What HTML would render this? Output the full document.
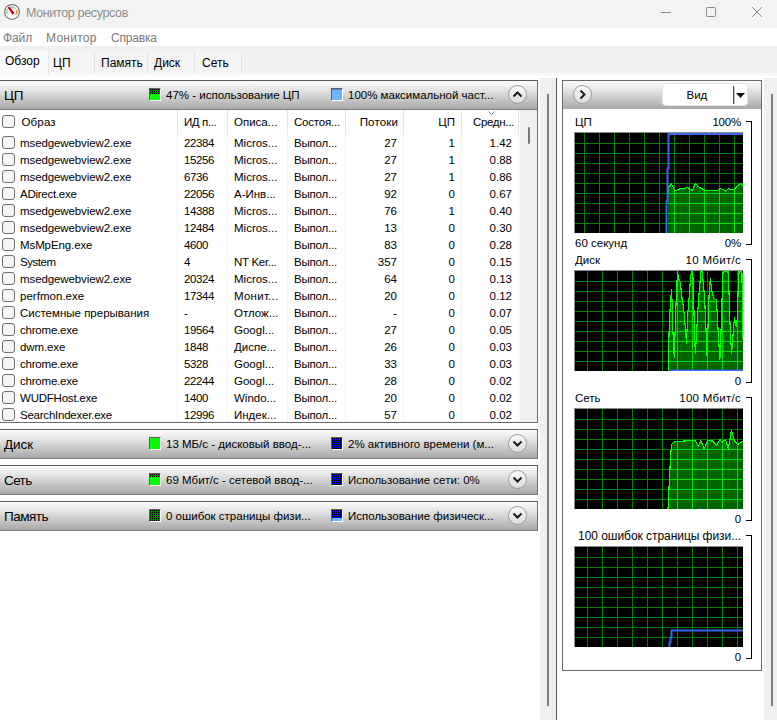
<!DOCTYPE html>
<html lang="ru"><head><meta charset="utf-8"><title>Монитор ресурсов</title>
<style>
*{margin:0;padding:0;box-sizing:border-box}
html,body{width:777px;height:720px;overflow:hidden;background:#fff}
body{position:relative;font-family:"Liberation Sans",sans-serif;font-size:11.5px;color:#000;line-height:1}
i{font-style:normal;display:block;position:absolute}
#titlebar{position:absolute;left:0;top:0;width:777px;height:28px;background:#f3f3f3}
#titlebar .ttl{position:absolute;left:26px;top:5px;font-size:12.5px;letter-spacing:-0.35px;color:#8b8b8b;white-space:nowrap;line-height:16px}
#menubar{position:absolute;left:0;top:28px;width:777px;height:18px;background:#fff}
#menubar span{position:absolute;top:3px;font-size:12px;color:#7a7a7a;white-space:nowrap;line-height:14px}
#tabs{position:absolute;left:0;top:46px;width:777px;height:31px;background:linear-gradient(#f0f0f0 0,#f0f0f0 26.5px,#f9f9f9 26.5px,#f9f9f9 30px,#efefef 30px,#f6f6f6 31px)}
#tabs .tab{position:absolute;top:6px;height:21px;border-right:1px solid #e0e0e0;border-top:1px solid #f6f6f6;background:#f3f3f3;font-size:12px;line-height:14px;padding-top:3px;white-space:nowrap}
#tabs .tab.act{top:4px;height:26px;background:#f9f9f9;border-top:none;border-right:1px solid #e8e8e8;padding-top:4px}
#below{position:absolute;left:0;top:76px;width:777px;height:644px;background:#fff}
#left{position:absolute;left:0;top:80px;width:538px;height:640px}
.shead{position:absolute;left:0;width:538px;height:30px;border-top:1px solid #5a5a5a;border-bottom:1px solid #7d7d7d;border-right:1px solid #6a6a6a;background:linear-gradient(#fbfbfb 0%,#eeeeee 20%,#d5d5d5 50%,#bababa 80%,#a8a8a8 100%)}
.shead .st{position:absolute;left:4px;top:7px;font-size:13.5px;line-height:15px;white-space:nowrap}
.shead .lt{position:absolute;top:7px;font-size:11.5px;line-height:14px;white-space:nowrap}
.lg{position:absolute;top:7px;width:12px;height:13px;border:1px solid;border-color:#5f5f5f #fff #fff #5f5f5f}
.lg b{display:block;width:10px;height:11px}
.lg u{display:block;position:absolute;left:0;top:0;width:10px;background:conic-gradient(#000 25%,#008000 0) 1px 0/2px 2px}
.lg u.bl{background:conic-gradient(#000 25%,#0000ff 0) 1px 0/2px 2px}
.circ{position:absolute;top:4px;width:19px;height:19px;border-radius:50%;border:1px solid #9c9c9c;background:linear-gradient(#fafafa,#dcdcdc)}
.circ svg{position:absolute;left:0;top:0}
#table{position:absolute;left:0;top:30px;width:538px;height:313px;border-right:1px solid #6a6a6a;border-bottom:1px solid #6a6a6a;background:#fff;overflow:hidden}
.thead{position:absolute;left:0;top:0;width:519px;height:24px}
.tr{position:absolute;left:0;width:519px;height:17px}
.c{position:absolute;top:3px;white-space:nowrap;font-size:11.5px;line-height:13px}
.thead .c{top:6px}
.thead .c1{left:21.5px;letter-spacing:0.15px}
.thead .c7{right:5px;letter-spacing:-0.3px}
.thead .c5{letter-spacing:0.15px;right:121px}
.c4{letter-spacing:-0.2px}
.c1{left:20px;letter-spacing:-0.1px}.c2{left:184px;letter-spacing:-0.4px}.c3{left:234px}.c4{left:294px}
.c5{right:122px;text-align:right}.c6{right:64px;text-align:right}.c7{right:7px;text-align:right}
.cb{position:absolute;left:2px;top:2px;width:13px;height:13px;border:1px solid #6e6e6e;border-radius:3px;background:#f5f5f5}
.hs{top:0;width:1px;height:24px;background:#e5e5e5}
.vs{top:24px;width:1px;height:290px;background:#edf3fb}
.sort{position:absolute;left:488px;top:1px}
.sbar{position:absolute;left:520px;top:0;width:17px;height:313px;background:#f0f0f0}
.sbar i{left:8px;top:17px;width:2px;height:17px;background:#7a7a7a;border-radius:1px}
#lscroll{position:absolute;left:540px;top:78px;width:16px;height:642px;background:#f0f0f0}
#lscroll i{left:7px;top:16px;width:2px;height:612px;background:#7f7f7f}
#vline{position:absolute;left:556px;top:78px;width:1px;height:642px;background:#555}
#rscroll{position:absolute;left:764px;top:78px;width:13px;height:642px;background:#f0f0f0}
#rscroll i{left:7px;top:16px;width:2px;height:612px;background:#7f7f7f}
#rbox{position:absolute;left:562px;top:80px;width:200px;height:591px;border:1px solid #6a6a6a;background:#fff}
#rhead{position:absolute;left:0;top:0;width:198px;height:28px;background:linear-gradient(#fbfbfb 0%,#eeeeee 20%,#d5d5d5 50%,#bababa 80%,#a8a8a8 100%)}
#vid{position:absolute;left:99px;top:2px;width:86px;height:23px;background:#fff;border-radius:4px;border:1px solid #e4e4e4}
#vid span{position:absolute;left:23.5px;top:4px;font-size:11.5px;line-height:14px}
.chart{position:absolute;left:11px;width:169px;height:101px;border-left:1px solid #8a8a8a;border-top:1px solid #8a8a8a;background:#000}
.chart svg{position:absolute;left:0;top:0}
.cl{position:absolute;left:12px;white-space:nowrap;font-size:11.5px;line-height:13px}
.cr{position:absolute;right:20px;letter-spacing:-0.2px;white-space:nowrap;font-size:11.5px;line-height:13px;text-align:right}
.br{position:absolute;left:183px;width:6px;border:1px solid #000;border-left:none}

</style></head>
<body>
<div id="titlebar">
<svg style="position:absolute;left:3px;top:3px" width="18" height="18" viewBox="0 0 18 18"><circle cx="9" cy="8.900" r="7.400" fill="#fbfaf8" stroke="#787c82" stroke-width="1.250"/><path d="M4.300 10.900 Q3.300 8.500 4.600 6.200 M7.200 4.300 Q10.200 3.500 12.700 5.700" fill="none" stroke="#7f9f80" stroke-width="0.900"/><path d="M13.600 6.800 Q14.300 9 13.500 10.900 L12.300 11.600" fill="none" stroke="#e8781e" stroke-width="1.200"/><path d="M4.800 4.700 L6.200 3.600 L11.500 10 L9.500 11.700 Z" fill="#d0000f"/></svg>
<span class="ttl">Монитор ресурсов</span>
<svg style="position:absolute;left:650px;top:0" width="127" height="28" viewBox="0 0 127 28"><path d="M11 12.5 H21" stroke="#8a8a8a" stroke-width="1"/><rect x="56.500" y="7.500" width="9" height="9" rx="1" fill="none" stroke="#8a8a8a" stroke-width="1"/><path d="M102 7 L112 17 M112 7 L102 17" stroke="#8a8a8a" stroke-width="1"/></svg>
</div>
<div id="menubar"><span style="left:3px;letter-spacing:-0.1px">Файл</span><span style="left:46px;letter-spacing:0.25px">Монитор</span><span style="left:111px;letter-spacing:-0.2px">Справка</span></div>
<div id="tabs">
<div class="tab act" style="left:0;width:49px;padding-left:5px">Обзор</div>
<div class="tab" style="left:49px;width:46px;padding-left:4px">ЦП</div>
<div class="tab" style="left:95px;width:53px;padding-left:6px">Память</div>
<div class="tab" style="left:148px;width:47px;padding-left:6px">Диск</div>
<div class="tab" style="left:195px;width:47px;padding-left:7px">Сеть</div>
</div>
<div id="below"></div>
<div id="lscroll"><i></i></div><div id="vline"></div><div id="rscroll"><i></i></div>
<div id="left">
<div class="shead" style="top:0"><span class="st" style="letter-spacing:-0.25px">ЦП</span>
<span class="lg" style="left:149px"><b style="background:#00ff00"></b><u style="height:5px"></u></span><span class="lt" style="left:166px">47% - использование ЦП</span>
<span class="lg" style="left:331px"><b style="background:#6eb4ff;border-top:1px solid #4a80e8"></b></span><span class="lt" style="left:348px">100% максимальной част...</span>
<span class="circ" style="left:508px"><svg width="17" height="17" viewBox="0 0 17 17"><path d="M4.5 10.500 L8.500 6.500 L12.500 10.500" fill="none" stroke="#1a1a1a" stroke-width="2"/></svg></span>
</div>
<div id="table">
<div class="thead"><span class="cb" style="top:5px"></span><span class="c c1">Образ</span><span class="c c2">ИД п...</span><span class="c c3">Описа...</span><span class="c c4">Состоя...</span><span class="c c5">Потоки</span><span class="c c6">ЦП</span><span class="c c7">Средн...</span><i class="hs" style="left:177px"></i><i class="hs" style="left:227px"></i><i class="hs" style="left:287px"></i><i class="hs" style="left:345px"></i><i class="hs" style="left:403px"></i><i class="hs" style="left:461px"></i><i class="hs" style="left:518px"></i><svg class="sort" width="7" height="4" viewBox="0 0 7 4"><path d="M0.500 0.500 L3.500 3.500 L6.500 0.500" fill="none" stroke="#8a8a8a" stroke-width="1"/></svg></div>
<div class="tr" style="top:24px"><span class="cb"></span><span class="c c1">msedgewebview2.exe</span><span class="c c2">22384</span><span class="c c3">Micros...</span><span class="c c4">Выпол...</span><span class="c c5">27</span><span class="c c6">1</span><span class="c c7">1.42</span></div>
<div class="tr" style="top:41px"><span class="cb"></span><span class="c c1">msedgewebview2.exe</span><span class="c c2">15256</span><span class="c c3">Micros...</span><span class="c c4">Выпол...</span><span class="c c5">27</span><span class="c c6">1</span><span class="c c7">0.88</span></div>
<div class="tr" style="top:58px"><span class="cb"></span><span class="c c1">msedgewebview2.exe</span><span class="c c2">6736</span><span class="c c3">Micros...</span><span class="c c4">Выпол...</span><span class="c c5">27</span><span class="c c6">1</span><span class="c c7">0.86</span></div>
<div class="tr" style="top:75px"><span class="cb"></span><span class="c c1" style="letter-spacing:-0.26px">ADirect.exe</span><span class="c c2">22056</span><span class="c c3">А-Инв...</span><span class="c c4">Выпол...</span><span class="c c5">92</span><span class="c c6">0</span><span class="c c7">0.67</span></div>
<div class="tr" style="top:92px"><span class="cb"></span><span class="c c1">msedgewebview2.exe</span><span class="c c2">14388</span><span class="c c3">Micros...</span><span class="c c4">Выпол...</span><span class="c c5">76</span><span class="c c6">1</span><span class="c c7">0.40</span></div>
<div class="tr" style="top:109px"><span class="cb"></span><span class="c c1">msedgewebview2.exe</span><span class="c c2">12484</span><span class="c c3">Micros...</span><span class="c c4">Выпол...</span><span class="c c5">13</span><span class="c c6">0</span><span class="c c7">0.30</span></div>
<div class="tr" style="top:126px"><span class="cb"></span><span class="c c1">MsMpEng.exe</span><span class="c c2">4600</span><span class="c c3"></span><span class="c c4">Выпол...</span><span class="c c5">83</span><span class="c c6">0</span><span class="c c7">0.28</span></div>
<div class="tr" style="top:143px"><span class="cb"></span><span class="c c1" style="letter-spacing:-0.46px">System</span><span class="c c2">4</span><span class="c c3" style="letter-spacing:-0.3px">NT Ker...</span><span class="c c4">Выпол...</span><span class="c c5">357</span><span class="c c6">0</span><span class="c c7">0.15</span></div>
<div class="tr" style="top:160px"><span class="cb"></span><span class="c c1">msedgewebview2.exe</span><span class="c c2">20324</span><span class="c c3">Micros...</span><span class="c c4">Выпол...</span><span class="c c5">64</span><span class="c c6">0</span><span class="c c7">0.13</span></div>
<div class="tr" style="top:177px"><span class="cb"></span><span class="c c1" style="letter-spacing:0.03px">perfmon.exe</span><span class="c c2">17344</span><span class="c c3" style="letter-spacing:0.25px">Монит...</span><span class="c c4">Выпол...</span><span class="c c5">20</span><span class="c c6">0</span><span class="c c7">0.12</span></div>
<div class="tr" style="top:194px"><span class="cb"></span><span class="c c1" style="letter-spacing:0px">Системные прерывания</span><span class="c c2">-</span><span class="c c3">Отлож...</span><span class="c c4">Выпол...</span><span class="c c5">-</span><span class="c c6">0</span><span class="c c7">0.07</span></div>
<div class="tr" style="top:211px"><span class="cb"></span><span class="c c1" style="letter-spacing:-0.21px">chrome.exe</span><span class="c c2">19564</span><span class="c c3">Googl...</span><span class="c c4">Выпол...</span><span class="c c5">27</span><span class="c c6">0</span><span class="c c7">0.05</span></div>
<div class="tr" style="top:228px"><span class="cb"></span><span class="c c1">dwm.exe</span><span class="c c2">1848</span><span class="c c3">Диспе...</span><span class="c c4">Выпол...</span><span class="c c5">26</span><span class="c c6">0</span><span class="c c7">0.03</span></div>
<div class="tr" style="top:245px"><span class="cb"></span><span class="c c1" style="letter-spacing:-0.21px">chrome.exe</span><span class="c c2">5328</span><span class="c c3">Googl...</span><span class="c c4">Выпол...</span><span class="c c5">33</span><span class="c c6">0</span><span class="c c7">0.03</span></div>
<div class="tr" style="top:262px"><span class="cb"></span><span class="c c1" style="letter-spacing:-0.21px">chrome.exe</span><span class="c c2">22244</span><span class="c c3">Googl...</span><span class="c c4">Выпол...</span><span class="c c5">28</span><span class="c c6">0</span><span class="c c7">0.02</span></div>
<div class="tr" style="top:279px"><span class="cb"></span><span class="c c1" style="letter-spacing:-0.22px">WUDFHost.exe</span><span class="c c2">1400</span><span class="c c3">Windo...</span><span class="c c4">Выпол...</span><span class="c c5">20</span><span class="c c6">0</span><span class="c c7">0.02</span></div>
<div class="tr" style="top:296px"><span class="cb"></span><span class="c c1" style="letter-spacing:-0.23px">SearchIndexer.exe</span><span class="c c2">12996</span><span class="c c3">Индек...</span><span class="c c4">Выпол...</span><span class="c c5">57</span><span class="c c6">0</span><span class="c c7">0.02</span></div>
<i class="vs" style="left:177px"></i><i class="vs" style="left:227px"></i><i class="vs" style="left:287px"></i><i class="vs" style="left:345px"></i><i class="vs" style="left:403px"></i><i class="vs" style="left:461px"></i><i class="vs" style="left:518px"></i>
<div class="sbar"><i></i></div>
</div>
<div class="shead" style="top:349px"><span class="st" style="letter-spacing:-0.1px">Диск</span>
<span class="lg" style="left:149px"><b style="background:#00ff00"></b></span><span class="lt" style="left:166px">13 МБ/с - дисковый ввод-...</span>
<span class="lg" style="left:331px"><b style="background:#0000ff"></b><u class="bl" style="height:11px"></u></span><span class="lt" style="left:348px">2% активного времени (м...</span>
<span class="circ" style="left:508px"><svg width="17" height="17" viewBox="0 0 17 17"><path d="M4.500 6.500 L8.500 10.500 L12.500 6.500" fill="none" stroke="#1a1a1a" stroke-width="2"/></svg></span>
</div>
<div class="shead" style="top:385px"><span class="st" style="letter-spacing:-0.6px">Сеть</span>
<span class="lg" style="left:149px"><b style="background:#00ff00"></b><u style="height:3px"></u></span><span class="lt" style="left:166px">69 Мбит/с - сетевой ввод-...</span>
<span class="lg" style="left:331px"><b style="background:#0000ff"></b><u class="bl" style="height:11px"></u></span><span class="lt" style="left:348px">Использование сети: 0%</span>
<span class="circ" style="left:508px"><svg width="17" height="17" viewBox="0 0 17 17"><path d="M4.500 6.500 L8.500 10.500 L12.500 6.500" fill="none" stroke="#1a1a1a" stroke-width="2"/></svg></span>
</div>
<div class="shead" style="top:421px"><span class="st" style="letter-spacing:-0.5px">Память</span>
<span class="lg" style="left:149px"><b style="background:#008000"></b><u style="height:11px"></u></span><span class="lt" style="left:166px">0 ошибок страницы физи...</span>
<span class="lg" style="left:331px"><b style="background:#6eb4ff"></b><u class="bl" style="height:8px"></u></span><span class="lt" style="left:348px">Использование физическ...</span>
<span class="circ" style="left:508px"><svg width="17" height="17" viewBox="0 0 17 17"><path d="M4.500 6.500 L8.500 10.500 L12.500 6.500" fill="none" stroke="#1a1a1a" stroke-width="2"/></svg></span>
</div>
</div>
<div id="rbox">
<div id="rhead"><span class="circ" style="left:10px"><svg width="17" height="17" viewBox="0 0 17 17"><path d="M6.500 4.500 L10.500 8.500 L6.500 12.500" fill="none" stroke="#1a1a1a" stroke-width="2"/></svg></span><div id="vid"><span>Вид</span><i style="left:70px;top:2px;width:1px;height:18px;background:#4a4a4a;box-shadow:1px 0 0 #c8c8c8"></i><svg style="position:absolute;left:72.500px;top:8.500px" width="9" height="5" viewBox="0 0 9 5"><path d="M0 0H9L4.500 5Z" fill="#111"/></svg></div></div>
<span class="cl" style="top:35px">ЦП</span><span class="cr" style="top:35px;">100%</span><div class="chart" style="top:51px"><svg width="168" height="100" viewBox="0 0 168 100" shape-rendering="auto"><path d="M9.5 0V100M24.5 0V100M39.5 0V100M54.5 0V100M69.5 0V100M84.5 0V100M99.5 0V100M114.5 0V100M129.5 0V100M144.5 0V100M159.5 0V100M0 10.5H168M0 20.5H168M0 30.5H168M0 40.5H168M0 50.5H168M0 60.5H168M0 70.5H168M0 80.5H168M0 90.5H168" stroke="#008000" stroke-width="1" fill="none"/><defs><clipPath id="cp0"><polygon points="93.0,100.0 93.0,60.7 93.4,54.6 96.3,50.8 99.9,57.9 102.9,56.6 106.0,55.4 109.0,56.1 112.1,54.1 114.8,56.1 117.4,57.3 120.5,50.3 123.5,53.8 127.4,56.1 129.7,57.2 140.4,57.2 141.9,58.0 144.9,55.0 148.0,56.4 150.6,58.1 153.3,55.7 156.4,56.4 159.4,56.1 165.6,50.3 167.9,52.3 168.9,52.3 168.0,100.0"/></clipPath></defs><polygon points="93.0,100.0 93.0,60.7 93.4,54.6 96.3,50.8 99.9,57.9 102.9,56.6 106.0,55.4 109.0,56.1 112.1,54.1 114.8,56.1 117.4,57.3 120.5,50.3 123.5,53.8 127.4,56.1 129.7,57.2 140.4,57.2 141.9,58.0 144.9,55.0 148.0,56.4 150.6,58.1 153.3,55.7 156.4,56.4 159.4,56.1 165.6,50.3 167.9,52.3 168.9,52.3 168.0,100.0" fill="#006400"/><path d="M9.5 0V100M24.5 0V100M39.5 0V100M54.5 0V100M69.5 0V100M84.5 0V100M99.5 0V100M114.5 0V100M129.5 0V100M144.5 0V100M159.5 0V100M0 10.5H168M0 20.5H168M0 30.5H168M0 40.5H168M0 50.5H168M0 60.5H168M0 70.5H168M0 80.5H168M0 90.5H168" stroke="#00e000" stroke-width="1" fill="none" clip-path="url(#cp0)"/><polyline points="93.0,60.7 93.4,54.6 96.3,50.8 99.9,57.9 102.9,56.6 106.0,55.4 109.0,56.1 112.1,54.1 114.8,56.1 117.4,57.3 120.5,50.3 123.5,53.8 127.4,56.1 129.7,57.2 140.4,57.2 141.9,58.0 144.9,55.0 148.0,56.4 150.6,58.1 153.3,55.7 156.4,56.4 159.4,56.1 165.6,50.3 167.9,52.3" fill="none" stroke="#00ff00" stroke-width="1.150" stroke-linejoin="round" shape-rendering="crispEdges"/><path d="M91.5 100V68.5H92.5V35.500H93.5V1H168" fill="none" stroke="#3a66f2" stroke-width="2"/></svg></div>
<span class="cl" style="top:156px">60 секунд</span><span class="cr" style="top:156px">0%</span><span class="br" style="top:40px;height:124px"></span>
<span class="cl" style="top:173px">Диск</span><span class="cr" style="top:173px;letter-spacing:0.3px">10 Мбит/с</span><div class="chart" style="top:189px"><svg width="168" height="100" viewBox="0 0 168 100" shape-rendering="auto"><path d="M12.5 0V100M27.5 0V100M42.5 0V100M57.5 0V100M72.5 0V100M87.5 0V100M102.5 0V100M117.5 0V100M132.5 0V100M147.5 0V100M162.5 0V100M0 10.5H168M0 20.5H168M0 30.5H168M0 40.5H168M0 50.5H168M0 60.5H168M0 70.5H168M0 80.5H168M0 90.5H168" stroke="#008000" stroke-width="1" fill="none"/><defs><clipPath id="cp1"><polygon points="93.1,100.0 93.1,99.2 93.4,86.7 94.1,60.2 95.3,33.0 96.5,19.0 97.2,33.0 97.9,60.2 99.3,86.7 100.4,51.4 101.5,19.0 102.6,0.7 103.8,8.0 105.3,11.7 107.1,27.9 108.8,38.9 110.0,52.9 111.5,72.0 112.6,45.5 114.1,26.4 115.6,5.8 116.6,0.0 117.6,0.0 118.2,10.2 119.1,45.5 120.3,82.3 121.5,64.6 122.8,39.6 124.0,23.5 125.1,10.2 125.9,0.0 127.4,0.0 127.9,7.3 129.1,20.5 129.9,33.8 131.0,58.8 132.1,85.2 133.1,52.9 134.1,23.5 135.3,7.3 136.5,17.6 138.5,27.1 141.2,28.6 142.2,41.1 143.4,64.6 144.9,88.2 145.9,63.2 146.8,39.6 147.5,8.8 148.2,0.0 152.9,0.0 153.7,10.2 154.7,45.5 155.6,66.1 156.6,82.3 157.6,70.5 158.5,55.8 159.6,46.3 160.6,52.9 161.5,55.8 162.4,45.5 163.2,16.1 164.1,0.0 166.9,0.0 167.4,30.8 167.6,67.6 168.6,67.6 168.0,100.0"/></clipPath></defs><polygon points="93.1,100.0 93.1,99.2 93.4,86.7 94.1,60.2 95.3,33.0 96.5,19.0 97.2,33.0 97.9,60.2 99.3,86.7 100.4,51.4 101.5,19.0 102.6,0.7 103.8,8.0 105.3,11.7 107.1,27.9 108.8,38.9 110.0,52.9 111.5,72.0 112.6,45.5 114.1,26.4 115.6,5.8 116.6,0.0 117.6,0.0 118.2,10.2 119.1,45.5 120.3,82.3 121.5,64.6 122.8,39.6 124.0,23.5 125.1,10.2 125.9,0.0 127.4,0.0 127.9,7.3 129.1,20.5 129.9,33.8 131.0,58.8 132.1,85.2 133.1,52.9 134.1,23.5 135.3,7.3 136.5,17.6 138.5,27.1 141.2,28.6 142.2,41.1 143.4,64.6 144.9,88.2 145.9,63.2 146.8,39.6 147.5,8.8 148.2,0.0 152.9,0.0 153.7,10.2 154.7,45.5 155.6,66.1 156.6,82.3 157.6,70.5 158.5,55.8 159.6,46.3 160.6,52.9 161.5,55.8 162.4,45.5 163.2,16.1 164.1,0.0 166.9,0.0 167.4,30.8 167.6,67.6 168.6,67.6 168.0,100.0" fill="#006400"/><path d="M12.5 0V100M27.5 0V100M42.5 0V100M57.5 0V100M72.5 0V100M87.5 0V100M102.5 0V100M117.5 0V100M132.5 0V100M147.5 0V100M162.5 0V100M0 10.5H168M0 20.5H168M0 30.5H168M0 40.5H168M0 50.5H168M0 60.5H168M0 70.5H168M0 80.5H168M0 90.5H168" stroke="#00e000" stroke-width="1" fill="none" clip-path="url(#cp1)"/><polyline points="93.1,99.2 93.4,86.7 94.1,60.2 95.3,33.0 96.5,19.0 97.2,33.0 97.9,60.2 99.3,86.7 100.4,51.4 101.5,19.0 102.6,0.7 103.8,8.0 105.3,11.7 107.1,27.9 108.8,38.9 110.0,52.9 111.5,72.0 112.6,45.5 114.1,26.4 115.6,5.8 116.6,0.0 117.6,0.0 118.2,10.2 119.1,45.5 120.3,82.3 121.5,64.6 122.8,39.6 124.0,23.5 125.1,10.2 125.9,0.0 127.4,0.0 127.9,7.3 129.1,20.5 129.9,33.8 131.0,58.8 132.1,85.2 133.1,52.9 134.1,23.5 135.3,7.3 136.5,17.6 138.5,27.1 141.2,28.6 142.2,41.1 143.4,64.6 144.9,88.2 145.9,63.2 146.8,39.6 147.5,8.8 148.2,0.0 152.9,0.0 153.7,10.2 154.7,45.5 155.6,66.1 156.6,82.3 157.6,70.5 158.5,55.8 159.6,46.3 160.6,52.9 161.5,55.8 162.4,45.5 163.2,16.1 164.1,0.0 166.9,0.0 167.4,30.8 167.6,67.6" fill="none" stroke="#00ff00" stroke-width="1.150" stroke-linejoin="round" shape-rendering="crispEdges"/><path d="M94 99.2H168" stroke="#3a66f2" stroke-width="1.600"/></svg></div>
<span class="cr" style="top:294px">0</span><span class="br" style="top:178px;height:124px"></span>
<span class="cl" style="top:311px">Сеть</span><span class="cr" style="top:311px;letter-spacing:0.25px">100 Мбит/с</span><div class="chart" style="top:327px"><svg width="168" height="100" viewBox="0 0 168 100" shape-rendering="auto"><path d="M12.5 0V100M27.5 0V100M42.5 0V100M57.5 0V100M72.5 0V100M87.5 0V100M102.5 0V100M117.5 0V100M132.5 0V100M147.5 0V100M162.5 0V100M0 10.5H168M0 20.5H168M0 30.5H168M0 40.5H168M0 50.5H168M0 60.5H168M0 70.5H168M0 80.5H168M0 90.5H168" stroke="#008000" stroke-width="1" fill="none"/><defs><clipPath id="cp2"><polygon points="93.0,100.0 93.0,99.8 93.4,90.5 94.5,68.3 95.6,46.9 96.5,35.5 99.1,33.2 102.9,32.1 107.5,32.1 115.9,31.7 120.0,31.2 123.5,37.5 125.8,31.7 129.2,39.8 132.7,31.7 138.1,32.1 141.4,36.3 144.9,30.6 147.2,33.2 150.6,30.6 153.3,40.1 156.4,21.3 159.4,31.7 162.5,35.5 167.9,32.1 168.9,32.1 168.0,100.0"/></clipPath></defs><polygon points="93.0,100.0 93.0,99.8 93.4,90.5 94.5,68.3 95.6,46.9 96.5,35.5 99.1,33.2 102.9,32.1 107.5,32.1 115.9,31.7 120.0,31.2 123.5,37.5 125.8,31.7 129.2,39.8 132.7,31.7 138.1,32.1 141.4,36.3 144.9,30.6 147.2,33.2 150.6,30.6 153.3,40.1 156.4,21.3 159.4,31.7 162.5,35.5 167.9,32.1 168.9,32.1 168.0,100.0" fill="#006400"/><path d="M12.5 0V100M27.5 0V100M42.5 0V100M57.5 0V100M72.5 0V100M87.5 0V100M102.5 0V100M117.5 0V100M132.5 0V100M147.5 0V100M162.5 0V100M0 10.5H168M0 20.5H168M0 30.5H168M0 40.5H168M0 50.5H168M0 60.5H168M0 70.5H168M0 80.5H168M0 90.5H168" stroke="#00e000" stroke-width="1" fill="none" clip-path="url(#cp2)"/><polyline points="93.0,99.8 93.4,90.5 94.5,68.3 95.6,46.9 96.5,35.5 99.1,33.2 102.9,32.1 107.5,32.1 115.9,31.7 120.0,31.2 123.5,37.5 125.8,31.7 129.2,39.8 132.7,31.7 138.1,32.1 141.4,36.3 144.9,30.6 147.2,33.2 150.6,30.6 153.3,40.1 156.4,21.3 159.4,31.7 162.5,35.5 167.9,32.1" fill="none" stroke="#00ff00" stroke-width="1.150" stroke-linejoin="round" shape-rendering="crispEdges"/><path d="M126 100V98.5" stroke="#3a66f2" stroke-width="1"/></svg></div>
<span class="cr" style="top:432px">0</span><span class="br" style="top:316px;height:124px"></span>
<span class="cr" style="top:449px;font-size:12px;letter-spacing:-0.05px">100 ошибок страницы физи...</span><div class="chart" style="top:465px"><svg width="168" height="100" viewBox="0 0 168 100" shape-rendering="auto"><path d="M12.5 0V100M27.5 0V100M42.5 0V100M57.5 0V100M72.5 0V100M87.5 0V100M102.5 0V100M117.5 0V100M132.5 0V100M147.5 0V100M162.5 0V100M0 10.5H168M0 20.5H168M0 30.5H168M0 40.5H168M0 50.5H168M0 60.5H168M0 70.5H168M0 80.5H168M0 90.5H168" stroke="#008000" stroke-width="1" fill="none"/><path d="M94.5 100V95.500H95.5V90.500H96.5V83.500H168" fill="none" stroke="#3a66f2" stroke-width="2"/></svg></div>
<span class="cr" style="top:570px">0</span><span class="br" style="top:454px;height:124px"></span>
</div>
</body></html>
